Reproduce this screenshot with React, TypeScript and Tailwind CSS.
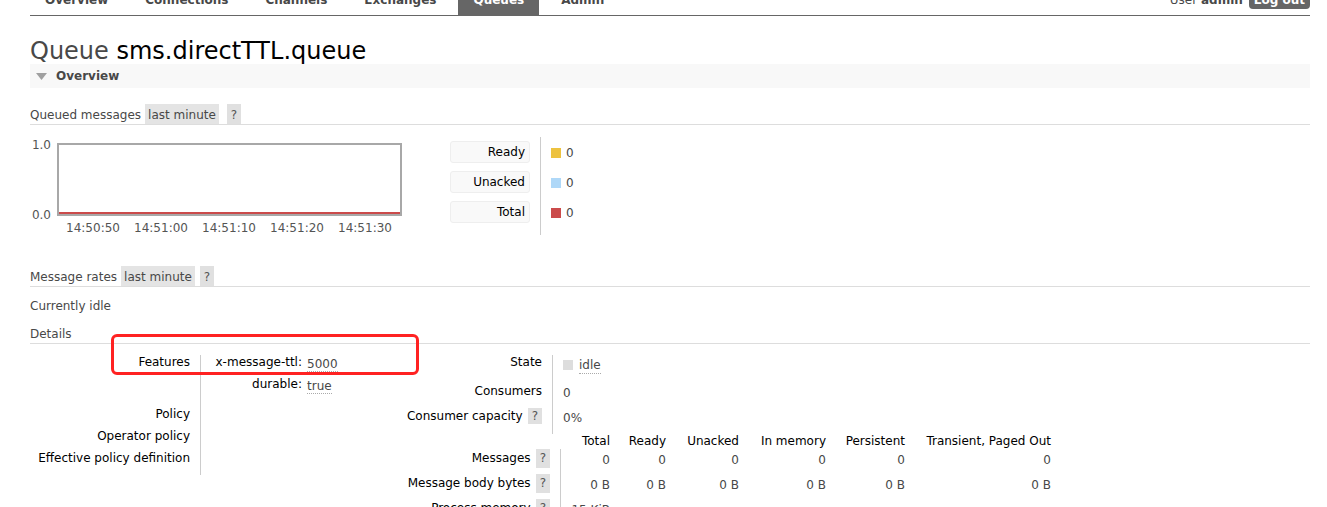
import React from "react";

const navItems = ["Overview", "Connections", "Channels", "Exchanges", "Queues", "Admin"];

const Chip = ({ children, className = "" }: { children: React.ReactNode; className?: string }) => (
    <span className={`inline-flex items-center bg-[#e4e4e4] text-[#484848] ${className}`}>{children}</span>
);

const Help = ({ className = "h-[20px]" }: { className?: string }) => (
    <span className={`inline-flex items-center justify-center bg-[#e0e0e0] px-[4px] text-[#555] ${className}`}>?</span>
);

const times = ["14:50:50", "14:51:00", "14:51:10", "14:51:20", "14:51:30"];

const legend = [
    { name: "Ready", color: "bg-[#edc240]" },
    { name: "Unacked", color: "bg-[#afd8f8]" },
    { name: "Total", color: "bg-[#cb4b4b]" },
];

const cols = [
    { name: "Total", w: "w-[50px]" },
    { name: "Ready", w: "w-[56px]" },
    { name: "Unacked", w: "w-[73px]" },
    { name: "In memory", w: "w-[87px]" },
    { name: "Persistent", w: "w-[79px]" },
    { name: "Transient, Paged Out", w: "w-[146px]" },
];

const Dotted = ({ children }: { children: React.ReactNode }) => (
    <span className="border-b border-dotted border-[#aaa]">{children}</span>
);

export default function App() {
    return (
        <div className="relative w-[1327px] h-[507px] overflow-hidden bg-white font-['DejaVu_Sans',Verdana,sans-serif] text-[12px] leading-[15px] text-[#484848]">
            <div className="ml-[30px] w-[1280px]">
                {/* header, scrolled so only its lower edge shows */}
                <div className="h-[16px] border-b border-[#666] flex justify-between">
                    <ul className="flex gap-[7px] -mt-[8px] font-bold">
                        {navItems.map(item => (
                            <li
                                key={item}
                                className={`px-[15px] leading-[16px] pb-[7px] ${item === "Queues" ? "bg-[#666] text-white" : "text-[#484848]"}`}
                            >
                                {item}
                            </li>
                        ))}
                    </ul>
                    <div className="flex items-start -mt-[8px] leading-[16px]">
                        <span>User <b>admin</b></span>
                        <span className="ml-[6px] bg-[#666] text-white font-bold px-[5px] pb-[1px] rounded-[4px]">Log out</span>
                    </div>
                </div>

                <h1 className="mt-[22px] h-[26px] text-[24px] leading-[26px] font-normal text-[#484848]">
                    Queue <span className="text-black">sms.directTTL.queue</span>
                </h1>

                <div className="h-[24px] bg-[#f8f8f8] flex items-center pl-[6px] pt-[1px] gap-[9px] font-bold text-[#484848]">
                    <svg width="11" height="7" viewBox="0 0 11 7"><polygon points="0,0 11,0 5.5,7" fill="#a0a0a0" /></svg>
                    Overview
                </div>

                <div className="mt-[16px] h-[21px] flex items-center border-b border-[#ddd]">
                    <span className="pt-[2px]">Queued messages</span>
                    <Chip className="ml-[4px] h-[20px] px-[3px] pt-[2px]">last minute</Chip>
                    <Help className="ml-[8px] h-[20px] pt-[2px]" />
                </div>

                {/* chart + legend */}
                <div className="mt-[12px] flex">
                    <div className="w-[420px]">
                        <div className="flex">
                            <div className="w-[27px] h-[84px] mt-[1px] pr-[6px] flex flex-col justify-between items-end leading-[14px] text-[#545454]">
                                <span>1.0</span>
                                <span>0.0</span>
                            </div>
                            <div className="mt-[6px] w-[345px] h-[73px] border-2 border-[#a8a8a8] flex flex-col justify-end">
                                <div className="h-[2px] bg-[#cb4b4b]" />
                            </div>
                        </div>
                        <div className="-mt-[1px] ml-[29px] flex leading-[14px] text-[#545454]">
                            {times.map(t => (
                                <span key={t} className="w-[68px] text-center">{t}</span>
                            ))}
                        </div>
                    </div>
                    <div className="flex">
                        <div className="w-[80px] flex flex-col gap-[8px] py-[4px]">
                            {legend.map(l => (
                                <div key={l.name} className="h-[22px] rounded-[3px] border border-[#eee] bg-[#f9f9f9] text-right pr-[4px] flex items-center justify-end text-black">
                                    {l.name}
                                </div>
                            ))}
                        </div>
                        <div className="ml-[10px] border-l border-[#ccc] pl-[10px] flex flex-col gap-[8px] py-[4px]">
                            {legend.map(l => (
                                <div key={l.name} className="h-[22px] flex items-center gap-[5px] pt-[2px]">
                                    <span className={`w-[10px] h-[10px] ${l.color}`} />
                                    <span>0</span>
                                </div>
                            ))}
                        </div>
                    </div>
                </div>

                <div className="mt-[31px] h-[21px] flex items-center border-b border-[#ddd]">
                    <span className="pt-[2px]">Message rates</span>
                    <Chip className="ml-[4px] h-[20px] px-[3px] pt-[2px]">last minute</Chip>
                    <Help className="ml-[5px] h-[20px] pt-[2px]" />
                </div>

                <div className="mt-[12px]">Currently idle</div>

                <div className="mt-[9px] h-[21px] pt-[2px] flex items-center border-b border-[#ddd]">Details</div>

                {/* details tables */}
                <div className="mt-[11px] flex">
                    <div className="w-[370px] flex flex-col">
                        <div className="flex h-[52px]">
                            <div className="w-[170px] pr-[10px] text-right text-black">Features</div>
                            <div className="border-l border-[#ccc] pl-[12px] flex flex-col">
                                <div className="flex h-[22px]">
                                    <span className="w-[89px] text-right text-black">x-message-ttl:</span>
                                    <span className="ml-[5px] pt-[2px]"><Dotted>5000</Dotted></span>
                                </div>
                                <div className="flex h-[22px]">
                                    <span className="w-[89px] text-right text-black">durable:</span>
                                    <span className="ml-[5px] pt-[2px]"><Dotted>true</Dotted></span>
                                </div>
                            </div>
                        </div>
                        {["Policy", "Operator policy", "Effective policy definition"].map((p, i) => (
                            <div key={p} className={`flex ${i === 2 ? "h-[24px]" : "h-[22px]"}`}>
                                <div className="w-[170px] pr-[10px] text-right text-black">{p}</div>
                                <div className="border-l border-[#ccc] pl-[12px]" />
                            </div>
                        ))}
                    </div>

                    <div className="flex flex-col">
                        <div className="flex h-[29px]">
                            <div className="w-[152px] pr-[10px] text-right text-black">State</div>
                            <div className="border-l border-[#ccc] pl-[10px] pt-[3px] flex items-start gap-[6px]">
                                <span className="mt-[2px] w-[10px] h-[10px] bg-[#ddd]" />
                                <Dotted>idle</Dotted>
                            </div>
                        </div>
                        <div className="flex h-[22px]">
                            <div className="w-[152px] pr-[10px] text-right text-black">Consumers</div>
                            <div className="border-l border-[#ccc] pl-[10px] pt-[2px]">0</div>
                        </div>
                        <div className="flex h-[28px]">
                            <div className="w-[152px] pr-[10px] flex justify-end items-start gap-[5px] text-black pt-[2px]">
                                <span className="pt-[1px]">Consumer capacity</span>
                                <Help className="h-[16px]" />
                            </div>
                            <div className="border-l border-[#ccc] pl-[10px] pt-[5px]">0%</div>
                        </div>

                        <div className="flex h-[15px] leading-[14px] text-black">
                            <div className="w-[160px]" />
                            {cols.map(c => (
                                <div key={c.name} className={`${c.w} text-right`}>{c.name}</div>
                            ))}
                        </div>
                        {[
                            { name: "Messages", vals: ["0", "0", "0", "0", "0", "0"] },
                            { name: "Message body bytes", vals: ["0 B", "0 B", "0 B", "0 B", "0 B", "0 B"] },
                            { name: "Process memory", vals: ["15 KiB", "", "", "", "", ""] },
                        ].map(row => (
                            <div key={row.name} className="flex h-[25px]">
                                <div className="w-[160px] pr-[10px] flex justify-end items-start gap-[5px] text-black">
                                    <span className="pt-[2px]">{row.name}</span>
                                    <Help className="h-[19px]" />
                                </div>
                                {cols.map((c, i) => (
                                    <div key={c.name} className={`${c.w} text-right pt-[4px] ${i === 0 ? "border-l border-[#ccc]" : ""}`}>
                                        {row.vals[i]}
                                    </div>
                                ))}
                            </div>
                        ))}
                    </div>
                </div>
            </div>

            {/* annotation box */}
            <div className="absolute left-[111px] top-[334px] w-[308px] h-[41px] border-[3px] border-[#ff2222] rounded-[6px]" />
        </div>
    );
}
